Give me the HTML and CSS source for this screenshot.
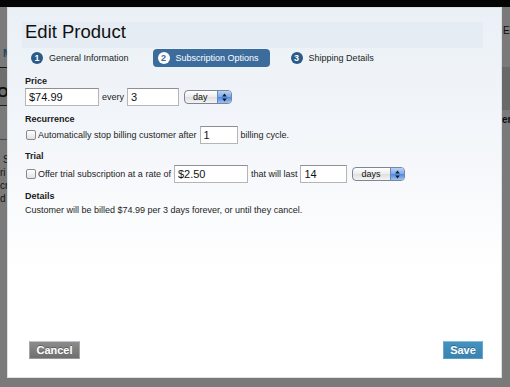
FILE: index.html
```html
<!DOCTYPE html>
<html lang="en">
<head>
    <meta charset="UTF-8">
    <meta name="viewport" content="width=device-width, initial-scale=1.0">
    <title>Edit Product</title>
    <link rel="stylesheet" href="styles.css">
</head>
<body>
    <!-- page behind the dialog -->
    <div class="page">
        <div class="page-top"></div>
        <div class="page-cols">
            <div class="page-side side-left">
                <div class="side-nav"><span class="side-link">M</span></div>
                <div class="side-band"><span class="side-heading">O</span></div>
                <div class="side-rows"></div>
                <div class="side-text">
                    <span class="t1">S</span>
                    <span>ri</span>
                    <span>cr</span>
                    <span>d</span>
                </div>
            </div>
            <div class="page-main"></div>
            <div class="page-side side-right">
                <div class="side-bar">Er</div>
                <div class="side-block"></div>
                <div class="side-strong">er</div>
            </div>
        </div>
    </div>
    <div class="overlay"></div>

    <div class="modal">
        <div class="modal-head">
            <h1>Edit Product</h1>
        </div>
        <ul class="steps">
            <li class="step"><span class="step-num">1</span>General Information</li>
            <li class="step step-active"><span class="step-num">2</span>Subscription Options</li>
            <li class="step"><span class="step-num">3</span>Shipping Details</li>
        </ul>

        <div class="modal-body">
            <h3 class="label label-price">Price</h3>
            <div class="row">
                <input type="text" class="text w-price" value="$74.99">
                <span>every</span>
                <input type="text" class="text w-every" value="3">
                <span class="select w-day"><span class="select-text">day</span><span class="select-arrows"><svg width="5" height="9" viewBox="0 0 5 9"><path d="M2.5 0.5L4.8 3.4H0.2z M2.5 8.5L0.2 5.6H4.8z" fill="#1a1a1a"/></svg></span></span>
            </div>

            <h3 class="label">Recurrence</h3>
            <div class="row">
                <input type="checkbox" class="check">
                <span>Automatically stop billing customer after</span>
                <input type="text" class="text w-cycles" value="1">
                <span>billing cycle.</span>
            </div>

            <h3 class="label label-trial">Trial</h3>
            <div class="row row-trial">
                <input type="checkbox" class="check">
                <span>Offer trial subscription at a rate of</span>
                <input type="text" class="text w-price" value="$2.50">
                <span>that will last</span>
                <input type="text" class="text w-last" value="14">
                <span class="select w-days"><span class="select-text">days</span><span class="select-arrows"><svg width="5" height="9" viewBox="0 0 5 9"><path d="M2.5 0.5L4.8 3.4H0.2z M2.5 8.5L0.2 5.6H4.8z" fill="#1a1a1a"/></svg></span></span>
            </div>

            <h3 class="label">Details</h3>
            <p class="details">Customer will be billed $74.99 per 3 days forever, or until they cancel.</p>
        </div>

        <div class="modal-foot">
            <button class="btn btn-cancel">Cancel</button>
            <button class="btn btn-save">Save</button>
        </div>
    </div>
</body>
</html>
```

FILE: styles.css
```css
body {
    margin: 0;
    padding: 0;
    width: 510px;
    height: 387px;
    overflow: hidden;
    position: relative;
    font-family: "Liberation Sans", Arial, sans-serif;
    font-size: 9px;
    color: #1c1c1c;
}

/* background page */
.page {
    height: 387px;
    background-color: #fff;
}
.page-top {
    height: 7px;
    background-color: #0a0a0a;
}
.page-cols {
    display: flex;
    height: 380px;
}
.page-side {
    display: flex;
    flex-direction: column;
    overflow: hidden;
    white-space: nowrap;
}
.side-left {
    width: 7px;
}
.side-right {
    width: 8px;
}
.page-main {
    flex: 1;
}
.side-nav {
    height: 60px;
    padding-left: 3px;
    box-sizing: border-box;
    padding-top: 40px;
}
.side-link {
    font-size: 11px;
    font-weight: bold;
    color: #4f8fcf;
}
.side-band {
    height: 39px;
    border-top: 1px solid #333;
    border-bottom: 1px solid #444;
    background-color: #e9e9e9;
    padding-top: 15px;
    box-sizing: border-box;
}
.side-heading {
    font-size: 15px;
    font-weight: bold;
    color: #222;
    margin-left: -3px;
}
.side-rows {
    height: 33px;
    border-bottom: 1px solid #999;
}
.side-text {
    display: flex;
    flex-direction: column;
    padding-top: 13px;
    line-height: 13px;
    font-size: 10px;
    color: #333;
}
.side-text .t1 {
    padding-left: 3px;
}
.side-bar {
    margin-top: 17px;
    height: 14px;
    line-height: 14px;
    padding-left: 1px;
    font-size: 10px;
    color: #222;
}
.side-block {
    margin-top: 29px;
    height: 43px;
    background-color: #dcdcdc;
}
.side-strong {
    margin-top: 4px;
    font-size: 10px;
    font-weight: bold;
    color: #222;
}
.overlay {
    position: absolute;
    left: 0;
    top: 0;
    width: 100%;
    height: 100%;
    background-color: rgba(0, 0, 0, 0.52);
}

/* dialog */
.modal {
    position: absolute;
    left: 7px;
    top: 7px;
    width: 495px;
    height: 371px;
    box-sizing: border-box;
    border: 1px solid #dde1e6;
    padding: 0 18px 18px 17px;
    background: linear-gradient(#eaf0f6, #f6f8fb 45%, #fff 70%);
    display: flex;
    flex-direction: column;
}
.modal-head {
    margin: 14px 0 0 -3px;
    height: 26px;
    padding-left: 3px;
    background-color: #e5ecf4;
}
.modal-head h1 {
    margin: 0;
    font-size: 18.5px;
    line-height: 20px;
    font-weight: normal;
    color: #111;
}
.steps {
    display: flex;
    gap: 16px;
    list-style: none;
    margin: 1px 0 0 1px;
    padding: 0;
}
.step {
    display: flex;
    align-items: center;
    height: 18px;
    padding: 0 8px 0 5px;
    border-radius: 4px;
}
.step-num {
    width: 12px;
    height: 12px;
    border-radius: 50%;
    background-color: #2a5a8b;
    color: #fff;
    font-weight: bold;
    font-size: 9px;
    line-height: 12px;
    text-align: center;
    margin-right: 6px;
}
.step-active {
    background-color: #3c6c9c;
    color: #fff;
    padding-right: 11px;
}
.step-active .step-num {
    background-color: #fff;
    color: #3c6c9c;
}

.label {
    margin: 8px 0 0;
    font-size: 9px;
    line-height: 11px;
    font-weight: bold;
    color: #1a1a1a;
}
.label-price {
    margin-top: 9px;
}
.label-trial {
    margin-top: 7px;
}
.row {
    display: flex;
    align-items: center;
    gap: 3px;
    margin-top: 1px;
    height: 18px;
}
.row-trial {
    margin-top: 3px;
}
.text {
    height: 18px;
    box-sizing: border-box;
    margin: 0;
    padding: 0 3px;
    border: 1px solid #b5b5b5;
    border-top-color: #8f8f8f;
    background-color: #fff;
    font-family: "Liberation Sans", Arial, sans-serif;
    font-size: 11px;
    color: #111;
}
.w-price {
    width: 74px;
}
.w-every {
    width: 52px;
}
.w-cycles {
    width: 38px;
}
.w-last {
    width: 47px;
}
.check {
    appearance: none;
    -webkit-appearance: none;
    width: 10px;
    height: 10px;
    margin: 0 -1px 0 1px;
    border: 1px solid #8a8a8a;
    border-radius: 2px;
    background: linear-gradient(#fff, #e2e2e2);
    box-sizing: border-box;
}
.select {
    display: flex;
    height: 14px;
    margin-left: 2px;
    box-sizing: border-box;
    border: 1px solid #7d8697;
    border-radius: 4px;
    overflow: hidden;
    background: linear-gradient(#fff, #ececec 50%, #dedede 51%, #f4f4f4);
}
.w-day {
    width: 48px;
}
.w-days {
    width: 53px;
}
.select-text {
    flex: 1;
    padding-left: 8px;
    line-height: 12px;
    font-size: 9px;
    color: #111;
}
.select-arrows {
    width: 13px;
    display: flex;
    align-items: center;
    justify-content: center;
    border-left: 1px solid #6a86b4;
    background: linear-gradient(#b8d3f6, #7aa8ec 50%, #4f86e0 51%, #9cc2f3);
}
.details {
    margin: 3px 0 0;
    line-height: 11px;
}

.modal-foot {
    margin-top: auto;
    display: flex;
    justify-content: space-between;
    padding-left: 4px;
}
.btn {
    height: 18px;
    padding: 0;
    border: 1px solid;
    font-family: "Liberation Sans", Arial, sans-serif;
    font-size: 11px;
    font-weight: bold;
    color: #fff;
    text-shadow: 0 -1px 0 rgba(0, 0, 0, 0.3);
}
.btn-cancel {
    width: 51px;
    background: linear-gradient(#8c8c8c, #6f6f6f);
    border-color: #c4c4c4 #a6a6a6 #9a9a9a;
}
.btn-save {
    width: 40px;
    background: linear-gradient(#4592bf, #3884b1);
    border-color: #86bcdc #6aa7cc #5d9cc3;
}
```
